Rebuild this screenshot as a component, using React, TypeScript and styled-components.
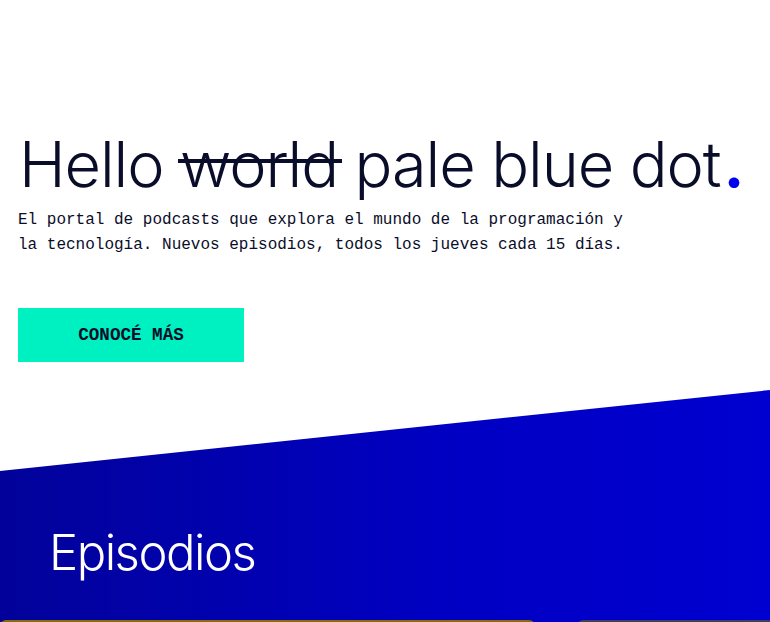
import React from "react";
import styled, { createGlobalStyle } from "styled-components";

const Global = createGlobalStyle`
  html, body { margin: 0; padding: 0; background: #ffffff; }
  body { font-family: Inter, "Noto Sans", sans-serif; overflow: hidden; }
`;

const Page = styled.div`
  width: 770px;
  height: 622px;
  overflow: hidden;
`;

const Hero = styled.header`
  height: 390px;
  box-sizing: border-box;
  padding: 128px 18px 0 18px;
  display: flex;
  flex-direction: column;
  align-items: flex-start;
`;

const Title = styled.h1`
  margin: 0 0 0 1px;
  font-family: Inter, "Noto Sans", sans-serif;
  font-weight: 300;
  font-size: 63px;
  line-height: 72px;
  color: #0a0d29;
  letter-spacing: -1.1px;
  white-space: nowrap;
`;

const Struck = styled.span`
  position: relative;
  &::after {
    content: "";
    position: absolute;
    left: -2px;
    right: -4px;
    top: 33px;
    height: 4px;
    background: #0a0d29;
  }
`;

const Dot = styled.span`
  color: #0000ee;
  font-weight: 700;
  margin-left: 3px;
`;

const Lead = styled.p`
  margin: 8px 0 0 0;
  font-family: "Liberation Mono", "DejaVu Sans Mono", monospace;
  font-size: 16px;
  line-height: 25px;
  color: #0a0d29;
  width: 620px;
`;

const Button = styled.a`
  margin-top: 50px;
  width: 226px;
  height: 54px;
  display: flex;
  align-items: center;
  justify-content: center;
  background: #00f1c1;
  color: #0a0d29;
  font-family: "Liberation Mono", "DejaVu Sans Mono", monospace;
  font-weight: 700;
  font-size: 17.6px;
  text-decoration: none;
`;

const Episodes = styled.section`
  background: linear-gradient(90deg, #02029a 0%, #0000c4 60%, #0000d0 100%);
  clip-path: polygon(0 81px, 100% 0, 100% 100%, 0 100%);
  padding: 133px 0 0 0;
  height: 300px;
  box-sizing: border-box;
`;

const SectionTitle = styled.h2`
  margin: 0 0 0 49px;
  font-family: Inter, "Noto Sans", sans-serif;
  font-weight: 300;
  font-size: 49px;
  line-height: 60px;
  letter-spacing: -1.5px;
  color: #ffffff;
`;

const CardRow = styled.div`
  margin-top: 37px;
  display: flex;
  gap: 42px;
`;

const Card = styled.div<{ $bg: string; $w: number }>`
  flex: 0 0 ${(p) => p.$w}px;
  height: 200px;
  border-radius: 6px;
  background: ${(p) => p.$bg};
`;

export default function App() {
  return (
    <Page>
      <Global />
      <Hero>
        <Title>
          Hello <Struck>world</Struck> pale blue dot<Dot>.</Dot>
        </Title>
        <Lead>
          El portal de podcasts que explora el mundo de la programación y la
          tecnología. Nuevos episodios, todos los jueves cada 15 días.
        </Lead>
        <Button href="#">CONOCÉ MÁS</Button>
      </Hero>
      <Episodes>
        <SectionTitle>Episodios</SectionTitle>
        <CardRow>
          <Card $bg="#8a6b0c" $w={535} />
          <Card $bg="#3f3f55" $w={400} />
        </CardRow>
      </Episodes>
    </Page>
  );
}
